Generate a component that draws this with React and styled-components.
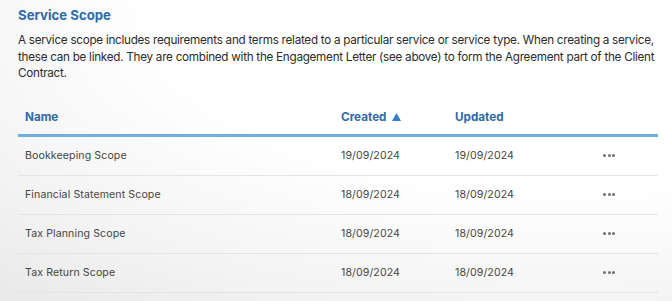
import React from 'react';
import styled, { createGlobalStyle } from 'styled-components';

const GlobalStyle = createGlobalStyle`
  html, body {
    margin: 0;
    padding: 0;
  }
  body {
    width: 672px;
    height: 301px;
    overflow: hidden;
    font-family: Inter, "Liberation Sans", sans-serif;
    background: radial-gradient(ellipse 900px 420px at 560px 0px, #ffffff 45%, #f3f3f3 75%, #e6e6e6 100%);
  }
`;

const Page = styled.div`
  padding: 5px 14px 0 18px;
`;

const Title = styled.h2`
  margin: 0;
  font-size: 13.2px;
  font-weight: 700;
  line-height: 20px;
  color: #2f6aa8;
`;

const Intro = styled.p`
  margin: 7px 0 0;
  font-size: 11.7px;
  letter-spacing: -0.27px;
  line-height: 16.5px;
  color: #2c2c2c;
  white-space: nowrap;
`;

const Table = styled.div`
  margin-top: 18px;
  width: 640px;
`;

const Row = styled.div`
  display: grid;
  grid-template-columns: 316px 114px 140px 1fr;
  align-items: center;
  height: ${({ $head }) => ($head ? '34px' : '38px')};
  border-bottom: ${({ $head }) => ($head ? '3px solid #6fb0e4' : '1px solid #e4e4e4')};
`;

const HeadCell = styled.div`
  padding-left: 7px;
  font-size: 11.7px;
  font-weight: 700;
  color: #2f6aa8;
  display: flex;
  align-items: center;
  gap: 6px;
`;

const Cell = styled.div`
  padding-left: 7px;
  font-size: 10.6px;
  color: #454545;
  letter-spacing: 0.1px;
`;

const Dots = styled.div`
  padding-left: 15px;
  display: flex;
  gap: 1.6px;

  span {
    width: 3px;
    height: 3px;
    border-radius: 50%;
    background: #707070;
  }
`;

const SortArrow = () => (
  <svg width="9" height="8" viewBox="0 0 9 8">
    <path d="M4.5 0 L9 8 L0 8 Z" fill="#2f7fd0" />
  </svg>
);

const rows = [
  { name: 'Bookkeeping Scope', created: '19/09/2024', updated: '19/09/2024' },
  { name: 'Financial Statement Scope', created: '18/09/2024', updated: '18/09/2024' },
  { name: 'Tax Planning Scope', created: '18/09/2024', updated: '18/09/2024' },
  { name: 'Tax Return Scope', created: '18/09/2024', updated: '18/09/2024' },
];

export default function App() {
  return (
    <>
      <GlobalStyle />
      <Page>
        <Title>Service Scope</Title>
        <Intro>
          A service scope includes requirements and terms related to a particular service or service type. When creating a service,
          <br />
          these can be linked. They are combined with the Engagement Letter (see above) to form the Agreement part of the Client
          <br />
          Contract.
        </Intro>
        <Table>
          <Row $head>
            <HeadCell>Name</HeadCell>
            <HeadCell>
              Created <SortArrow />
            </HeadCell>
            <HeadCell>Updated</HeadCell>
            <div />
          </Row>
          {rows.map((r) => (
            <Row key={r.name}>
              <Cell>{r.name}</Cell>
              <Cell>{r.created}</Cell>
              <Cell>{r.updated}</Cell>
              <Dots>
                <span />
                <span />
                <span />
              </Dots>
            </Row>
          ))}
        </Table>
      </Page>
    </>
  );
}
